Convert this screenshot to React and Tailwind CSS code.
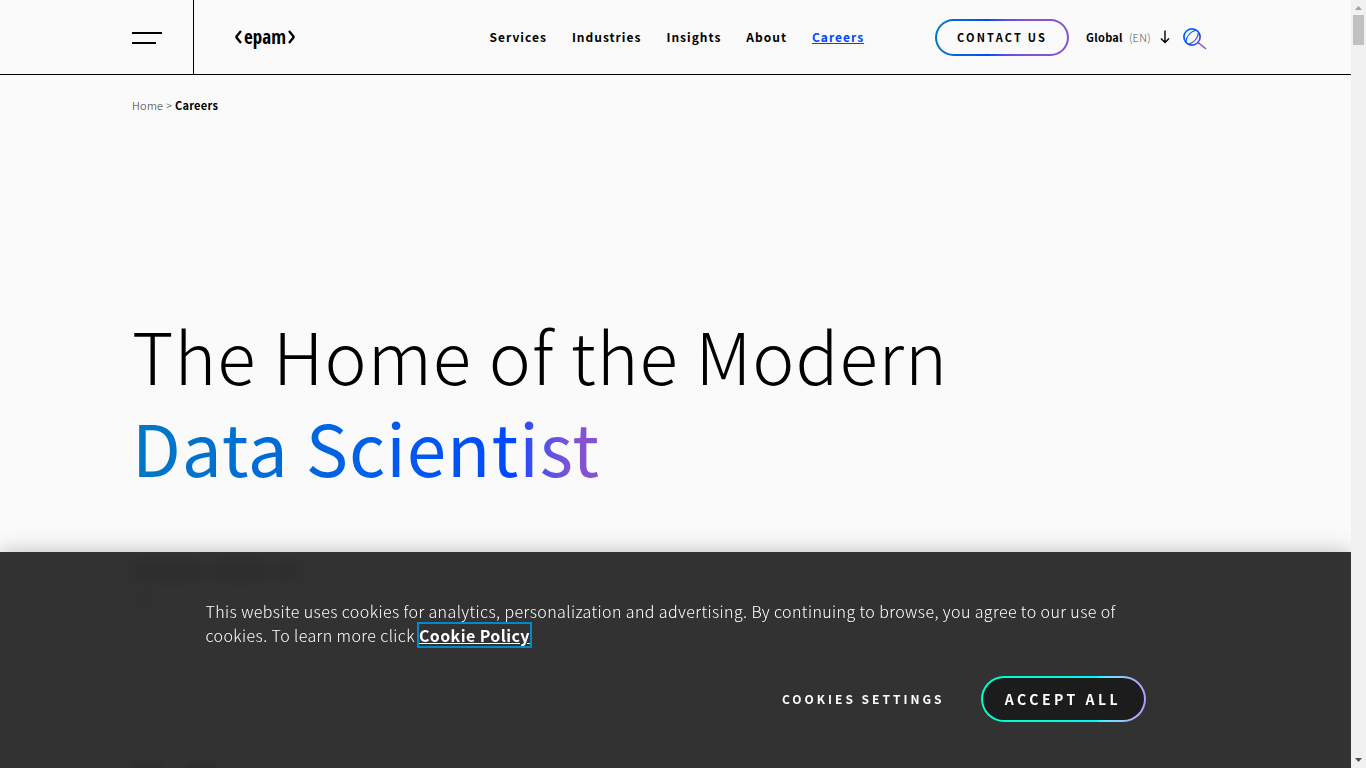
import React from "react";

const navLinks = ["Services", "Industries", "Insights", "About"];

function Logo() {
  return (
    <a href="#home" aria-label="epam" className="flex w-[60px] items-center justify-between">
      <svg className="shrink-0" width="7" height="14" viewBox="0 0 7 14" fill="none" stroke="#000" strokeWidth="2.3" aria-hidden="true">
        <path d="M6 1 1.500 6.500v1L6 13" />
      </svg>
      <span className="font-['Open_Sans_Condensed','Noto_Sans_ExtraCondensed','Roboto_Condensed','Noto_Sans_CJK_SC',sans-serif] text-[19px] font-bold leading-6">
        epam
      </span>
      <svg className="shrink-0" width="7" height="14" viewBox="0 0 7 14" fill="none" stroke="#000" strokeWidth="2.3" aria-hidden="true">
        <path d="m1 1 4.500 5.500v1L1 13" />
      </svg>
    </a>
  );
}

function SearchIcon() {
  return (
    <svg width="24" height="24" viewBox="0 0 24 24" fill="none" stroke="url(#searchStroke)" strokeLinecap="round" aria-hidden="true">
      <defs>
        <linearGradient id="searchStroke" gradientUnits="userSpaceOnUse" x1="0" y1="0" x2="24" y2="24">
          <stop offset="0" stopColor="#0078f0" />
          <stop offset="0.45" stopColor="#0047ff" />
          <stop offset="0.75" stopColor="#8453d2" />
          <stop offset="1" stopColor="#8453d2" />
        </linearGradient>
      </defs>
      <circle cx="9" cy="10" r="8.1" strokeWidth="1.7" />
      <path d="M3 14.500C3.500 9.500 7.500 5 12.500 3.200M6 17C11 15.300 14.500 11.500 15.500 6" strokeWidth="1.2" />
      <path d="m15 15.500 7.500 6" strokeWidth="1.600" />
    </svg>
  );
}

function Header() {
  return (
    <header className="border-b border-black">
      <div className="mx-auto flex h-[74px] w-full max-w-[1087px] items-center">
        <div className="flex h-full w-[62px] shrink-0 items-center border-r border-black pt-0.5">
          <button type="button" aria-label="Open menu" className="flex flex-col gap-2">
            <span className="h-[2px] w-[30px] bg-black" />
            <span className="h-[2px] w-[24px] bg-black" />
          </button>
        </div>
        <div className="ml-[41px] shrink-0">
          <Logo />
        </div>
        <nav aria-label="Main" className="ml-auto mr-[71px] flex gap-[25px] text-[12px] font-bold leading-5 tracking-[1px]">
          {navLinks.map((label) => (
            <a key={label} href={"#" + label.toLowerCase()}>
              {label}
            </a>
          ))}
          <a href="#careers" aria-current="page" className="text-[#0047ff] underline">
            Careers
          </a>
        </nav>
        <a
          href="#contact"
          className="rounded-full bg-linear-to-r from-[#0078c2] via-[#0047ff] via-40% to-[#8453d2] to-70% p-[2px]"
        >
          <span className="flex h-[33px] w-[130px] items-center justify-center rounded-full bg-[#fafafa] text-[11px] font-bold tracking-[0.2em]">
            CONTACT US
          </span>
        </a>
        <button type="button" className="ml-[17px] flex items-center gap-1.5 text-[11px] leading-4 tracking-wide">
          <span className="font-bold">Global</span>
          <span className="font-light text-[#555]">(EN)</span>
          <svg className="ml-[3px]" width="10" height="14" viewBox="0 0 10 14" fill="none" stroke="#000" strokeWidth="1.4" aria-hidden="true">
            <path d="M5 0.500v12M1 8.500l4 4 4-4" />
          </svg>
        </button>
        <button type="button" aria-label="Search" className="ml-[13px] mr-3 pt-1">
          <SearchIcon />
        </button>
      </div>
    </header>
  );
}

function CookieBanner() {
  return (
    <section
      aria-label="Cookie consent"
      className="absolute inset-x-0 bottom-0 bg-[#222222]/93 shadow-[0_0_20px_rgba(0,0,0,0.25)] backdrop-blur-[8px]"
    >
      <div className="mx-auto w-full max-w-[940px] pb-[46px] pt-[47px] text-white">
        <p className="text-[16px] font-light leading-6 tracking-wide">
          This website uses cookies for analytics, personalization and advertising. By continuing to browse, you agree
          to our use of cookies. To learn more click{" "}
          <a href="#cookie-policy" className="inline-block font-bold leading-[22px] underline outline-2 outline-[#008ace]">
            Cookie Policy
          </a>
        </p>
        <div className="mt-[29px] flex items-center justify-end gap-9">
          <button type="button" className="text-[12px] font-bold tracking-[0.25em]">
            COOKIES SETTINGS
          </button>
          <button
            type="button"
            className="rounded-full bg-linear-to-r from-[#00ffcc] from-35% via-[#00f6ff] via-70% to-[#b896ff] p-[2px]"
          >
            <span className="flex h-[42px] w-[161px] items-center justify-center rounded-full bg-[#1c1c1c] text-[14px] font-bold tracking-[0.25em]">
              ACCEPT ALL
            </span>
          </button>
        </div>
      </div>
    </section>
  );
}

function Scrollbar() {
  return (
    <div aria-hidden="true" className="flex w-[15px] shrink-0 flex-col items-center bg-[#f1f1f1]">
      <svg width="15" height="15" viewBox="0 0 15 15">
        <path d="M4 10h7L7.500 6z" fill="#a3a3a3" />
      </svg>
      <div className="h-[30px] w-[11px] bg-[#c1c1c1]" />
      <svg className="mt-auto" width="15" height="15" viewBox="0 0 15 15">
        <path d="M4 5h7L7.500 9z" fill="#505050" />
      </svg>
    </div>
  );
}

export default function App() {
  return (
    <div className="flex h-screen font-['Noto_Sans_CJK_SC',sans-serif] text-black">
      <div className="relative min-w-0 flex-1 overflow-hidden bg-[#fafafa]">
        <Header />
        <main className="mx-auto w-full max-w-[1087px]">
          <nav aria-label="Breadcrumb" className="pt-[22px] text-[11px] leading-4 tracking-wide">
            <a href="#home" className="font-light text-[#333]">
              Home
            </a>
            <span className="font-light text-[#333]"> &gt; </span>
            <span className="font-bold">Careers</span>
          </nav>
          <h1 className="mt-[195px] text-[71px] font-light leading-[92px] tracking-[1px]">
            The Home of the Modern
            <br />
            <span className="bg-linear-to-r from-[#0078c2] via-[#0047ff] via-82% to-[#8453d2] to-95% bg-clip-text font-normal text-transparent">
              Data Scientist
            </span>
          </h1>
          <div aria-hidden="true" className="mt-[73px]">
            <div className="flex gap-2">
              <div className="h-3 w-[72px] bg-black/50" />
              <div className="h-3 w-[56px] bg-black/50" />
              <div className="h-3 w-[24px] bg-black/50" />
            </div>
            <div className="mt-[19px] h-[8px] w-[22px] bg-black/30" />
            <div className="mt-[158px] flex gap-6">
              <div className="h-4 w-[30px] bg-black/30" />
              <div className="h-4 w-[30px] bg-black/30" />
            </div>
          </div>
        </main>
        <CookieBanner />
      </div>
      <Scrollbar />
    </div>
  );
}
